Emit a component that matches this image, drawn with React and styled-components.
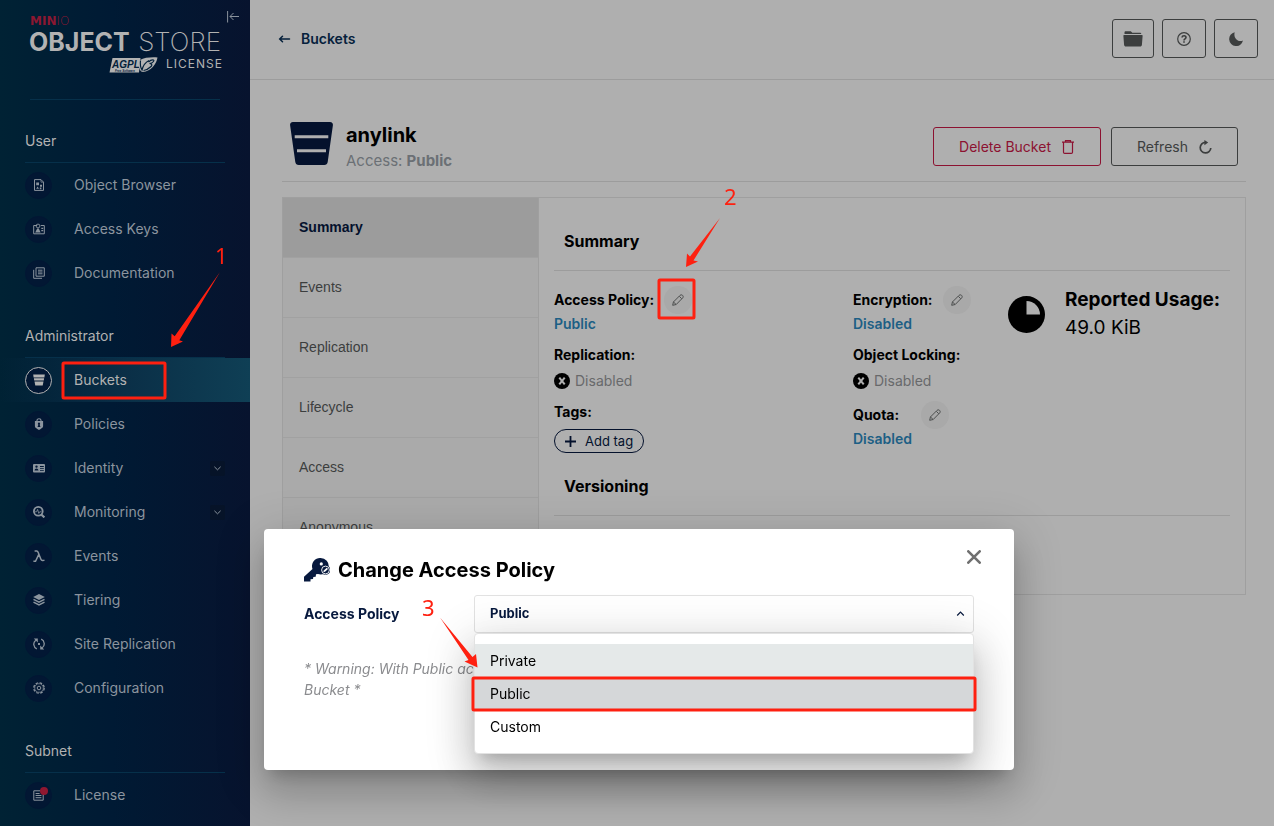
import React from "react";
import styled, { createGlobalStyle, css } from "styled-components";

const Global = createGlobalStyle`
  * { box-sizing: border-box; }
  body { margin: 0; background: #afafaf; font-family: Inter, "Liberation Sans", sans-serif; font-size: 14px; line-height: 20px; color: #000; }
  button, select { font-family: inherit; font-size: 14px; }
  h1, h2, h3, p, dl, dd, dt, ul { margin: 0; padding: 0; }
`;

const Page = styled.div`
  display: grid;
  grid-template-columns: 250px minmax(0, 1fr);
  min-height: 100vh;
`;

/* ---------- sidebar ---------- */
const Sidebar = styled.nav`
  background: linear-gradient(90deg, #002234 0%, #001a34 45%, #07132e 100%);
`;
const Brand = styled.div`
  position: relative;
  height: 100px;
  margin: 0 30px;
  border-bottom: 1px solid #06304a;
`;
const Logo = styled.svg`
  display: block;
  width: 190px;
  height: 80px;
  overflow: visible;
`;
const Collapse = styled.button`
  position: absolute;
  top: 10px;
  right: -19px;
  padding: 0;
  border: 0;
  background: none;
  color: #8a929c;
  svg { display: block; }
`;
const NavHeading = styled.h3`
  margin: 0 25px;
  padding: 31px 0 11px;
  border-bottom: 1px solid #06304a;
  color: #b2b2b2;
  font-size: 14px;
  font-weight: 400;
`;
const NavList = styled.ul`
  list-style: none;
`;
const NavLink = styled.a`
  display: flex;
  align-items: center;
  gap: 22px;
  height: 44px;
  padding: 0 25px;
  color: ${(p) => (p.$active ? "#b2b2b2" : "#8b949e")};
  text-decoration: none;
  ${(p) => p.$active && css`background: linear-gradient(90deg, rgba(14, 61, 82, 0) 0%, #0a2f47 50%, #0f3f55 100%);`}
`;
const NavIcon = styled.span`
  position: relative;
  display: grid;
  place-items: center;
  width: 27px;
  height: 27px;
  border: 1px solid ${(p) => (p.$active ? "#b2b2b2" : "#021634")};
  border-radius: 50%;
  background: #021733;
`;
const Dot = styled.i`
  position: absolute;
  top: 4px;
  right: 3px;
  width: 8px;
  height: 8px;
  border-radius: 50%;
  background: #8f1730;
`;
const NavText = styled.span`
  flex: 1;
`;
const Expand = styled.span`
  display: grid;
  place-items: center;
  width: 15px;
  height: 15px;
  border-radius: 2px;
  background: #061328;
`;

/* ---------- main ---------- */
const Main = styled.main`
  min-width: 0;
`;
const TopBar = styled.header`
  display: flex;
  align-items: center;
  justify-content: space-between;
  height: 80px;
  padding: 0 16px 2px 28px;
  border-bottom: 1px solid #9c9c9c;
`;
const BackLink = styled.a`
  display: flex;
  align-items: center;
  gap: 10px;
  color: #06213c;
  font-weight: 600;
  text-decoration: none;
`;
const TopActions = styled.div`
  display: flex;
  gap: 8px;
`;
const Button = styled.button`
  display: inline-flex;
  align-items: center;
  justify-content: center;
  gap: 10px;
  height: 39px;
  padding: 0 ${(p) => p.$pad}px;
  border: 1px solid ${(p) => (p.$danger ? "#8c1231" : "#3c3e3e")};
  border-radius: 3px;
  background: transparent;
  color: ${(p) => (p.$danger ? "#8c1231" : "#3c3e3e")};
`;
const Content = styled.div`
  padding: 30px 28px 0 32px;
`;
const BucketHeader = styled.section`
  display: flex;
  align-items: center;
  height: 72px;
  padding: 2px 8px 0 7px;
  border-bottom: 1px solid #9c9c9c;
`;
const BucketLogo = styled.svg`
  margin-bottom: 6px;
`;
const BucketName = styled.div`
  flex: 1;
  margin-left: 12px;
  padding-top: 2px;
`;
const Title = styled.h1`
  font-size: 20px;
  font-weight: 700;
  line-height: 26px;
`;
const Subtitle = styled.p`
  color: #6b7075;
  font-size: 15px;
  line-height: 26px;
`;
const HeaderActions = styled.div`
  display: flex;
  gap: 10px;
`;

const Panel = styled.section`
  display: grid;
  grid-template-columns: 256px minmax(0, 1fr);
  margin-top: 15px;
  border: 1px solid #9f9f9f;
`;
const Tabs = styled.div`
  border-right: 1px solid #9f9f9f;
`;
const Tab = styled.button`
  display: block;
  width: 100%;
  height: 60px;
  padding: 0 16px 2px;
  border: 0;
  border-bottom: 1px solid #a1a1a1;
  background: ${(p) => (p.$active ? "#9c9c9c" : "#aaaaaa")};
  color: ${(p) => (p.$active ? "#04112c" : "#3c3e3e")};
  font-family: "Liberation Sans", Arial, sans-serif;
  font-weight: ${(p) => (p.$active ? 700 : 400)};
  text-align: left;
`;
const TabBody = styled.div`
  padding: 0 15px 78px;
`;
const SectionTitle = styled.h2`
  padding: ${(p) => p.$top}px 10px 19px;
  border-bottom: 1px solid #9c9c9c;
  font-size: 16px;
  font-weight: 700;
`;
const Details = styled.div`
  display: grid;
  grid-template-columns: 299fr 155fr 222fr;
  padding-top: 15px;
`;
const Field = styled.div`
  margin-bottom: ${(p) => p.$after || 11}px;
`;
const FieldLabel = styled.div`
  display: flex;
  align-items: center;
  gap: ${(p) => p.$gap || 10}px;
  min-height: ${(p) => (p.$edit ? 28 : 20)}px;
  font-weight: 700;
  white-space: nowrap;
`;
const ValueLink = styled.a`
  display: block;
  color: #1d5f85;
  font-weight: 600;
  text-decoration: none;
`;
const Status = styled.div`
  display: flex;
  align-items: center;
  gap: 5px;
  margin-top: 6px;
  color: #68696b;
`;
const EditButton = styled.button`
  display: grid;
  place-items: center;
  width: 28px;
  height: 28px;
  padding: 0;
  border: 0;
  border-radius: 50%;
  background: #a9a9a9;
  color: #4c4e4e;
`;
const TagButton = styled.button`
  display: inline-flex;
  align-items: center;
  gap: 9px;
  height: 24px;
  margin-top: 7px;
  padding: 0 10px;
  border: 1px solid #04112c;
  border-radius: 12px;
  background: transparent;
  color: #04112c;
  && { font-size: 13px; }
`;
const Usage = styled.div`
  display: flex;
  align-items: center;
  align-self: start;
  gap: 20px;
  font-size: 19px;
  line-height: 28px;
  white-space: nowrap;
  svg { flex: none; }
`;

/* ---------- dialog ---------- */
const Overlay = styled.div`
  position: fixed;
  inset: 0;
  display: flex;
  align-items: flex-end;
  justify-content: center;
  padding: 0 0 56px 4px;
`;
const elevation = css`
  box-shadow: 0 11px 15px -7px rgba(0, 0, 0, 0.2), 0 24px 38px 3px rgba(0, 0, 0, 0.14), 0 9px 46px 8px rgba(0, 0, 0, 0.12);
`;
const Dialog = styled.section`
  position: relative;
  width: 750px;
  padding: 28px 40px 70px;
  border-radius: 4px;
  background: #fff;
  ${elevation}
`;
const DialogTitle = styled.h2`
  display: flex;
  align-items: center;
  gap: 8px;
  font-size: 20px;
  font-weight: 700;
  line-height: 26px;
`;
const Close = styled.button`
  position: absolute;
  top: 21px;
  right: 33px;
  padding: 0;
  border: 0;
  background: none;
  color: #707070;
  svg { display: block; }
`;
const FormRow = styled.div`
  display: grid;
  grid-template-columns: 170px minmax(0, 1fr);
  align-items: center;
  margin-top: 12px;
  color: #07193e;
  font-weight: 700;
`;
const SelectBox = styled.div`
  position: relative;
`;
const Select = styled.select`
  display: block;
  width: 100%;
  height: 38px;
  padding: 0 15px 2px;
  border: 1px solid #e2e2e2;
  border-radius: 3px;
  background: #fff;
  color: #07193e;
  && { font-size: 13px; }
  font-weight: 700;
  appearance: none;
`;
const Caret = styled.svg`
  position: absolute;
  top: 15px;
  right: 9px;
`;
const Menu = styled.ul`
  position: absolute;
  top: 100%;
  left: 0;
  right: 0;
  padding: 10px 0;
  border: 1px solid #e2e2e2;
  border-radius: 4px;
  background: #fff;
  color: #000;
  font-weight: 400;
  list-style: none;
  ${elevation}
`;
const Option = styled.li`
  padding: 0 15px;
  line-height: 33px;
  background: ${(p) => p.$bg || "transparent"};
`;
const Warning = styled.p`
  margin-top: 25px;
  color: #8b8c8f;
  font-style: italic;
  line-height: 21px;
`;

/* ---------- annotations ---------- */
const Marks = styled.div`
  position: absolute;
  inset: 0;
  pointer-events: none;
`;
const Arrows = styled.svg`
  position: absolute;
  top: 0;
  left: 0;
`;
const Step = styled.span`
  position: absolute;
  left: ${(p) => p.$x}px;
  top: ${(p) => p.$y}px;
  color: #fe2010;
  font-family: "Noto Sans", sans-serif;
  font-size: 22px;
  line-height: 24px;
`;

const C = "currentColor";
const icons = {
  browser: (
    <>
      <path d="M1.500 .6h6.500l2.500 2.500v8.300h-9z" fill="none" stroke={C} />
      <path d="M8 .8v2.400h2.300" fill="none" stroke={C} strokeWidth=".7" />
      <path d="M3.200 3.400h2.800v2.800H3.200zM7 5.800h2v2H7zM3.200 9.800l1.400-2.200L6 9.800zM6.800 8.600h1.600v1.600H6.800z" fill={C} />
    </>
  ),
  keys: (
    <>
      <path d="M4.200 2.500H.7v8.300h10.600V2.500H7.800" fill="none" stroke={C} />
      <circle cx="5" cy="3" r="1.900" fill="none" stroke={C} strokeWidth=".9" />
      <path d="M2.200 9.400L4.200 5.600h1.600L7.600 9.400zM8.300 4.800h1.900v1.300H8.300zM8.300 7h1.900v1.200H8.300z" fill={C} />
    </>
  ),
  docs: <path d="M3 .8h8.300v8.400H3zM.7 2.800v8.500H9M5 3.200h4.500M5 5h4.500M5 6.800h4.500" fill="none" stroke={C} />,
  bucket: <path d="M.2.6h11.600l-.4 2.800H.6zM.9 4.200h10.200l-.3 2.400H1.200zM1.500 7.400h9l-.8 4.200H2.300z" fill={C} />,
  policies: (
    <>
      <path d="M4 3V2.200C4 .3 8 .3 8 2.200V3" fill="none" stroke={C} strokeWidth="1.100" />
      <path d="M1.900 3h8.200v5.200C10.100 9.800 7.600 11 6 12 4.400 11 1.900 9.800 1.900 8.200z" fill={C} />
      <path d="M6 4.600a1.200 1.200 0 0 1 .6 2.200L7.500 9h-3l.9-2.200A1.200 1.200 0 0 1 6 4.600z" fill="#021634" />
    </>
  ),
  identity: (
    <>
      <rect x="0" y="2" width="12" height="8.400" rx="1" fill={C} />
      <path d="M3.500 3.400a1.200 1.200 0 0 1 0 2.400 1.200 1.200 0 0 1 0-2.400M1.500 8.600c.2-2.800 3.800-2.800 4 0zM7 4h3.800v1H7zM7 6.200h3.800v.8H7zM7 8h3.800v.8H7z" fill="#021634" />
    </>
  ),
  monitoring: (
    <>
      <circle cx="5.300" cy="5.300" r="4.400" fill="none" stroke={C} strokeWidth="1.800" />
      <path d="M8 8.200l3.400 3.200" stroke={C} strokeWidth="2.200" />
      <path d="M2 5.800h1.600l1-2.400 1.200 4 .9-1.600h1.800" fill="none" stroke={C} strokeWidth=".8" />
    </>
  ),
  lambda: <path d="M1.600 1h2.200c.8 0 1 .5 1.300 1.300l2.800 7c.4 1.200 1.300 1.500 2.700 1.100l.9-.3M5.700 4.600 2.500 11.300H.4" fill="none" stroke={C} strokeWidth="1.500" />,
  tiering: (
    <>
      <path d="M6 0l5.800 3L6 6 .2 3z" fill={C} />
      <path d="M.5 5.400 6 8.200l5.500-2.800M.5 8.200 6 11l5.500-2.800" fill="none" stroke={C} strokeWidth="1.500" />
    </>
  ),
  replication: (
    <>
      <path d="M3.800 10.800A5 5 0 0 1 2.800 2.200M8.200 1.200a5 5 0 0 1 1 8.600" fill="none" stroke={C} strokeWidth="1.300" />
      <path d="M.8 .6h4v3.800zM11.200 11.400h-4V7.600z" fill={C} />
      <rect x="5" y="5" width="2" height="2" fill={C} />
    </>
  ),
  gear: (
    <>
      <circle cx="6" cy="6" r="5.200" fill="none" stroke={C} strokeWidth="1.300" strokeDasharray="2.600 1.480" />
      <circle cx="6" cy="6" r="4.300" fill="none" stroke={C} strokeWidth=".7" />
      <circle cx="6" cy="6" r="1.800" fill="none" stroke={C} />
    </>
  ),
  license: <path d="M7.500 1.800H.8v9.400h9.400V5.500M2.600 4.500h4M2.600 6.500h5.800M2.600 8.700h5.800" fill="none" stroke={C} />,
};

const sections = [
  { title: "User", items: [["Object Browser", "browser"], ["Access Keys", "keys"], ["Documentation", "docs"]] },
  {
    title: "Administrator",
    items: [
      ["Buckets", "bucket", { active: true }],
      ["Policies", "policies"],
      ["Identity", "identity", { expand: true }],
      ["Monitoring", "monitoring", { expand: true }],
      ["Events", "lambda"],
      ["Tiering", "tiering"],
      ["Site Replication", "replication"],
      ["Configuration", "gear"],
    ],
  },
  { title: "Subnet", items: [["License", "license", { dot: true }]] },
];

const NavItem = ({ label, icon, active, expand, dot }) => (
  <li>
    <NavLink href="#" $active={active} aria-current={active ? "page" : undefined}>
      <NavIcon $active={active}>
        <svg width="12" height="12" viewBox="0 0 12 12">{icons[icon]}</svg>
        {dot && <Dot />}
      </NavIcon>
      <NavText>{label}</NavText>
      {expand && (
        <Expand>
          <svg width="7" height="5" viewBox="0 0 7 5"><path d="M.4.8l3.100 3L6.600.8" fill="none" stroke={C} /></svg>
        </Expand>
      )}
    </NavLink>
  </li>
);

const BrandLogo = () => (
  <Logo viewBox="30 0 190 80" role="img" aria-label="MinIO Object Store, AGPL v3 license">
    <g fill="#8c1731" fontSize="12" fontFamily="DejaVu Sans">
      <text x="30" y="25"><tspan fontWeight="700">MIN</tspan><tspan fontWeight="200">IO</tspan></text>
    </g>
    <g fill="#b2b2b2" fontFamily="Inter">
      <text x="29" y="51" fontSize="25" fontWeight="700">OBJECT</text>
      <text x="221" y="51" fontSize="26" fontWeight="200" textAnchor="end">STORE</text>
      <text x="166" y="68" fontSize="12" letterSpacing="1">LICENSE</text>
    </g>
    <path d="M112.500 58h28l-1.500 14.500h-29.500z" fill="#b2b2b2" />
    <text x="112" y="68" fontSize="10" fontWeight="700" fontStyle="italic" fontFamily="Liberation Sans" fill="#03203a">AGPL</text>
    <text x="115" y="72" fontSize="3" fontWeight="700" fontStyle="italic" fontFamily="Liberation Sans" fill="#03203a">Free Software</text>
    <path d="M140 60c4-2.500 12-3 17.500-2.500-1 6-6 14-15 14.500-3.500-1-4.500-7-2.500-12z" fill="#b2b2b2" />
    <path d="M140.500 60.500c-.5 4 0 7 1.500 9.500 1-4 4-8 7-9.500M148.500 62c3-3 6.500-2.500 5-.5s-4 2-4 2 4 .5 1.500 3-4.500 3.500-7.500 4" fill="none" stroke="#03203a" strokeWidth="1.200" />
  </Logo>
);

const Pencil = () => (
  <svg width="12" height="12" viewBox="0 0 12 12" fill="none" stroke={C}>
    <path d="M.7 11.300l.7-3.300L8 1.400c1.700-1.700 4.300.8 2.700 2.500L4.200 10.500zM1.500 8l2.600 2.500M7.300 2.300l2.400 2.400" />
  </svg>
);
const Edit = ({ label }) => (
  <EditButton type="button" aria-label={label}><Pencil /></EditButton>
);
const Disabled = () => (
  <Status>
    <svg width="16" height="16" viewBox="0 0 16 16">
      <circle cx="8" cy="8" r="8" />
      <path d="M5.300 4.600l5.400 6.800M10.700 4.600l-5.400 6.800" stroke="#afafaf" strokeWidth="2" />
    </svg>
    Disabled
  </Status>
);

export default function App() {
  return (
    <>
      <Global />
      <Page>
        <Sidebar>
          <Brand>
            <BrandLogo />
            <Collapse type="button" aria-label="Collapse menu">
              <svg width="12" height="13" viewBox="0 0 12 13" fill="none" stroke={C}>
                <path d="M.6 1v11.500M12 6.500H3M6.500 3L3 6.500 6.500 10" />
              </svg>
            </Collapse>
          </Brand>
          {sections.map((s) => (
            <React.Fragment key={s.title}>
              <NavHeading>{s.title}</NavHeading>
              <NavList>
                {s.items.map(([label, icon, opts]) => (
                  <NavItem key={label} label={label} icon={icon} {...opts} />
                ))}
              </NavList>
            </React.Fragment>
          ))}
        </Sidebar>

        <Main>
          <TopBar>
            <BackLink href="#">
              <svg width="13" height="8" viewBox="0 0 13 8">
                <path d="M2 4h9.500M4.500 1.200L1.700 4l2.800 2.800" fill="none" stroke={C} strokeWidth="1.500" strokeLinecap="round" />
              </svg>
              Buckets
            </BackLink>
            <TopActions>
              <Button type="button" $pad={10} aria-label="Files">
                <svg width="20" height="16" viewBox="0 0 20 16" fill={C}>
                  <path d="M1.500 3V1.500C1.500.7 2 .2 2.800.2h5l1.500 1.500h7.400c1 0 1.600.5 1.600 1.300zM1.300 4h17.400c.7 0 1 .4.900 1.100l-.7 9c-.1.900-.8 1.500-1.700 1.500H2.800c-.9 0-1.600-.6-1.700-1.500l-.7-9C.3 4.400.6 4 1.300 4z" />
                </svg>
              </Button>
              <Button type="button" $pad={14} aria-label="Help">
                <svg width="14" height="14" viewBox="0 0 14 14" fill="none" stroke={C}>
                  <circle cx="7" cy="7" r="6.300" strokeWidth="1.200" />
                  <path d="M5 5.500c.2-2.300 4-2.300 4 0C9 7 7 6.800 7 8.400M7 9.300v1.500" strokeWidth="1.600" />
                </svg>
              </Button>
              <Button type="button" $pad={14} aria-label="Dark mode">
                <svg width="14" height="14" viewBox="0 0 14 14" fill={C}>
                  <path d="M5.700.2A7 7 0 1 0 14 8.600C9.500 10.600 4 6.600 5.700.2z" />
                </svg>
              </Button>
            </TopActions>
          </TopBar>

          <Content>
            <BucketHeader>
              <BucketLogo width="45" height="44" viewBox="0 0 45 44" fill="#04112c">
                <path d="M4 0h37c2 0 3.200 1.300 2.900 3.200L38.700 40c-.3 2-1.600 3-3.400 3H9.700c-1.800 0-3.100-1-3.400-3L1.100 3.200C.8 1.300 2 0 4 0z" />
                <path d="M5.700 14.700h33.600M8 28.700h29" stroke="#afafaf" strokeWidth="3" />
              </BucketLogo>
              <BucketName>
                <Title>anylink</Title>
                <Subtitle>Access: <b>Public</b></Subtitle>
              </BucketName>
              <HeaderActions>
                <Button type="button" $danger $pad={25}>
                  Delete Bucket
                  <svg width="14" height="14" viewBox="0 0 14 14" fill="none" stroke={C} strokeWidth="1.200">
                    <path d="M1 2.100h12M4.500 1.800V.6h5v1.200M2.500 2.100v10.100c0 .8.400 1.200 1.200 1.200h6.600c.8 0 1.200-.4 1.200-1.200V2.100" />
                  </svg>
                </Button>
                <Button type="button" $pad={25}>
                  Refresh
                  <svg width="14" height="14" viewBox="0 0 14 14">
                    <path d="M7.500 2.300A5.300 5.300 0 1 0 12.800 8" fill="none" stroke={C} strokeWidth="1.700" />
                    <path d="M6.400 0l3.800 2.500-3.800 2.700z" fill={C} />
                  </svg>
                </Button>
              </HeaderActions>
            </BucketHeader>

            <Panel>
              <Tabs role="tablist">
                {["Summary", "Events", "Replication", "Lifecycle", "Access", "Anonymous"].map((t, i) => (
                  <Tab key={t} type="button" role="tab" $active={i === 0} aria-selected={i === 0}>{t}</Tab>
                ))}
              </Tabs>
              <TabBody>
                <SectionTitle $top={33}>Summary</SectionTitle>
                <Details>
                  <div>
                    <Field>
                      <FieldLabel $edit>Access Policy: <Edit label="Edit access policy" /></FieldLabel>
                      <ValueLink href="#">Public</ValueLink>
                    </Field>
                    <Field>
                      <FieldLabel>Replication:</FieldLabel>
                      <Disabled />
                    </Field>
                    <FieldLabel>Tags:</FieldLabel>
                    <TagButton type="button">
                      <svg width="11" height="11" viewBox="0 0 11 11"><path d="M5.500 0v11M0 5.500h11" stroke={C} strokeWidth="1.800" /></svg>
                      Add tag
                    </TagButton>
                  </div>
                  <div>
                    <Field>
                      <FieldLabel $edit>Encryption: <Edit label="Edit encryption" /></FieldLabel>
                      <ValueLink href="#">Disabled</ValueLink>
                    </Field>
                    <Field $after={10}>
                      <FieldLabel>Object Locking:</FieldLabel>
                      <Disabled />
                    </Field>
                    <FieldLabel $edit $gap={22}>Quota: <Edit label="Edit quota" /></FieldLabel>
                    <ValueLink href="#">Disabled</ValueLink>
                  </div>
                  <Usage>
                    <svg width="37" height="37" viewBox="0 0 37 37">
                      <circle cx="18.500" cy="18.500" r="18.500" />
                      <path d="M18.500 5A13.500 13.500 0 0 1 32 18.500H18.500z" fill="#afafaf" />
                    </svg>
                    <div>
                      <b>Reported Usage:</b>
                      <div>49.0 KiB</div>
                    </div>
                  </Usage>
                </Details>
                <SectionTitle $top={23}>Versioning</SectionTitle>
              </TabBody>
            </Panel>
          </Content>
        </Main>
      </Page>

      <Overlay>
        <Dialog role="dialog" aria-labelledby="dialog-title">
          <DialogTitle id="dialog-title">
            <svg width="26" height="24" viewBox="0 0 26 24" fill="#07193e">
              <path d="M16.500 0A8.200 8.200 0 1 1 14 16l-2 .3-.3 2.400-2.400.2-.3 2.200-2.500.2v2.200H0v-4.800L8.500 11A8.200 8.200 0 0 1 16.500 0z" />
              <circle cx="17.300" cy="5.900" r="1.600" fill="#fff" />
              <circle cx="21.500" cy="12" r="4.800" />
              <circle cx="21.500" cy="12" r="3.900" fill="none" stroke="#fff" strokeWidth=".9" />
              <path d="M19.300 14.200l.5-1.700 3-2.800 1.200 1.200-3 2.900z" fill="#fff" />
            </svg>
            Change Access Policy
          </DialogTitle>
          <Close type="button" aria-label="Close">
            <svg width="14" height="14" viewBox="0 0 14 14"><path d="M1.300 1.300l11.400 11.400M12.700 1.300L1.300 12.700" stroke={C} strokeWidth="2.600" strokeLinecap="round" /></svg>
          </Close>
          <FormRow>
            <label htmlFor="policy">Access Policy</label>
            <SelectBox>
              <Select id="policy" defaultValue="Public">
                <option>Private</option>
                <option>Public</option>
                <option>Custom</option>
              </Select>
              <Caret width="9" height="7" viewBox="0 0 9 7"><path d="M1.200 5.500l3.300-3.500 3.300 3.500" fill="none" stroke="#07193e" strokeWidth="1.200" /></Caret>
              <Menu role="listbox">
                <Option role="option" $bg="#e5e9e9">Private</Option>
                <Option role="option" $bg="#d5d7d9" aria-selected>Public</Option>
                <Option role="option">Custom</Option>
              </Menu>
            </SelectBox>
          </FormRow>
          <Warning>
            * Warning: With Public access anyone will be able to upload, download and delete files from this Bucket *
          </Warning>
        </Dialog>
      </Overlay>

      <Marks>
        <Arrows width="1000" height="800" viewBox="0 0 1000 800">
          <g fill="none" stroke="#fe2010" strokeWidth="3">
            <rect x="63" y="363" width="102" height="35" rx="1" />
            <rect x="659" y="280" width="35" height="38" rx="1" />
            <rect x="473" y="678" width="502" height="32" rx="1" />
          </g>
          <g fill="#fe2010">
            <path d="M220 272l-40.700 68.300 3.700 1.200-12 5.500.5-13.500 3.200 2.800z" />
            <path d="M720 218l-26.500 42.500 4.500 1-12 5.500 1-13.500 3 3z" />
            <path d="M440 617.500l32.500 39.500 3.500-3 1.500 13.500-13-6 4-1.500z" />
          </g>
        </Arrows>
        <Step $x={215} $y={243}>1</Step>
        <Step $x={724} $y={184}>2</Step>
        <Step $x={422} $y={595}>3</Step>
      </Marks>
    </>
  );
}
